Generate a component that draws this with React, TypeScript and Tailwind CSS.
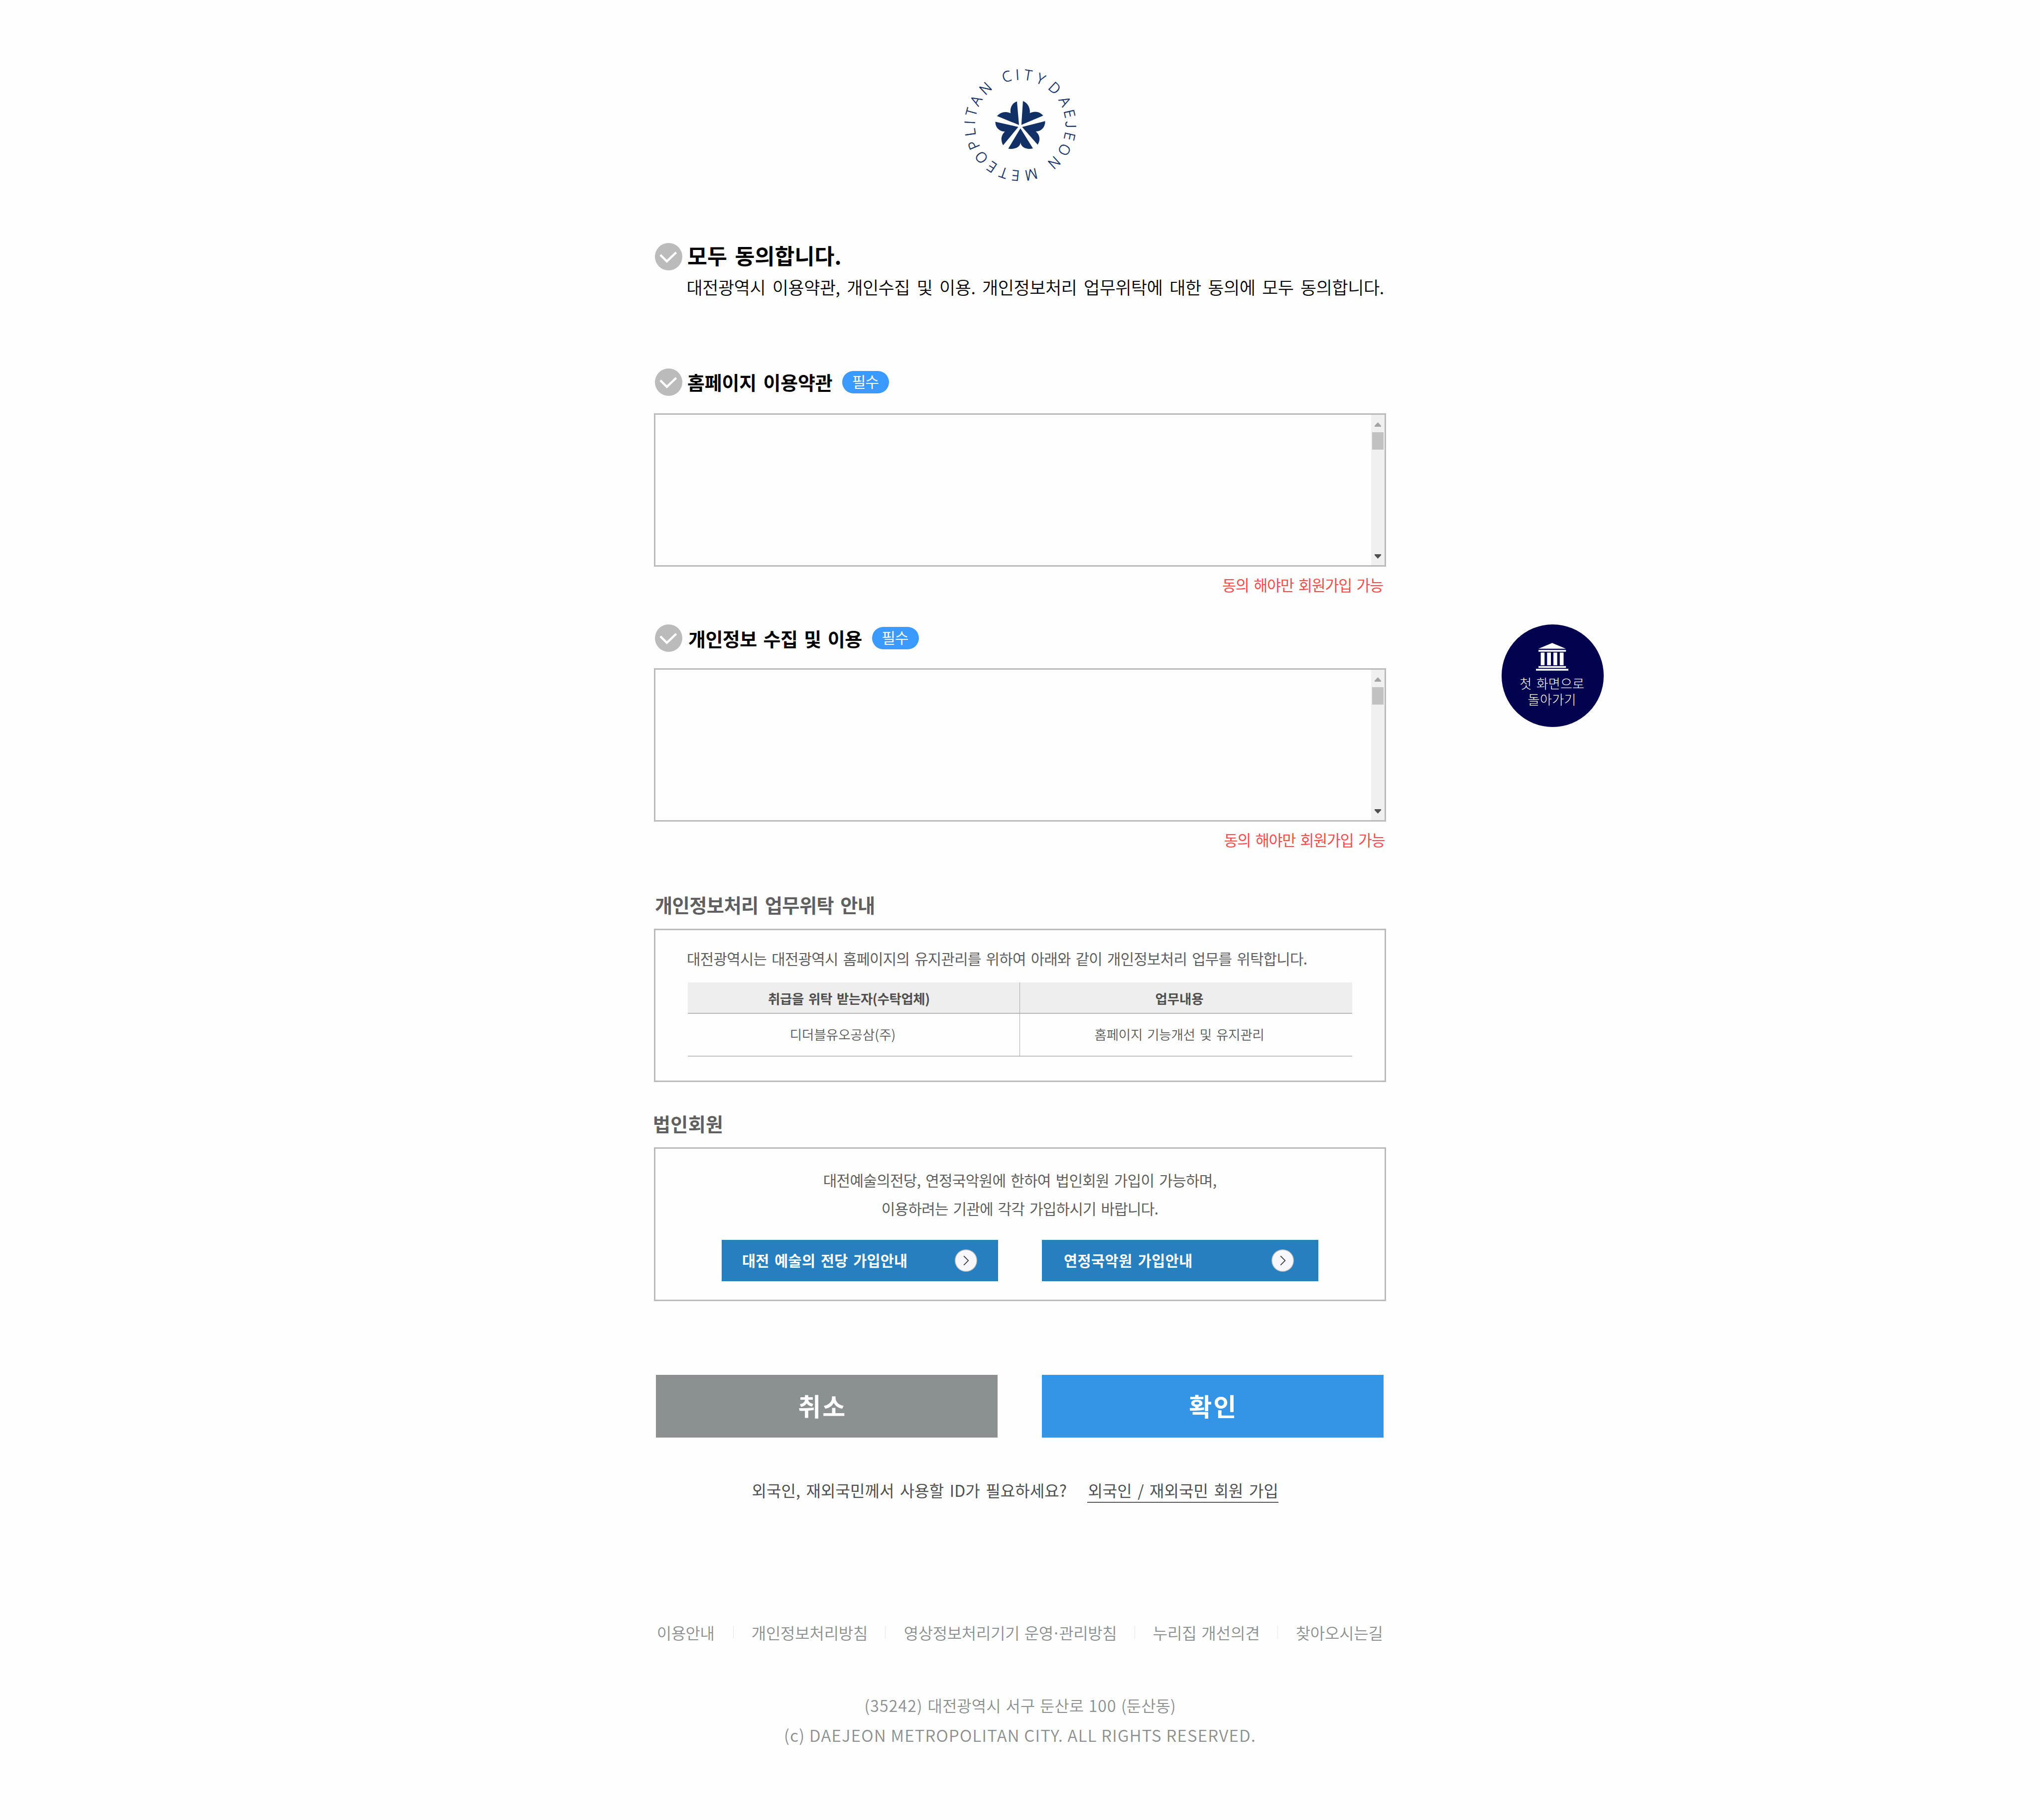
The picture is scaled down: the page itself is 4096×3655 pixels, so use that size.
import type { ReactNode } from "react";

/* Letters of the ring around the emblem, with their clockwise angle from the top. */
const ringLetters: [string, number][] = [
  ["D", 42.9], ["A", 62], ["E", 76.9], ["J", 89.5], ["E", 102.8], ["O", 119.2], ["N", 137.9],
  ["M", 167.4], ["E", 185.3], ["T", 199.3], ["E", 214.1], ["O", 230.3], ["P", 246.8], ["L", 261.8],
  ["I", 273.1], ["T", 285.1], ["A", 299.1], ["N", 316.5],
  ["C", 344.3], ["I", 356.8], ["T", 9], ["Y", 24],
];

function Logo() {
  return (
    <svg className="mx-auto h-[288px] w-[295px]" viewBox="2.5 0 1230 1200" fill="#122f66">
      {ringLetters.map(([letter, angle], i) => (
        <text
          key={i}
          x="617.5"
          y="217"
          textAnchor="middle"
          transform={`rotate(${angle} 617.5 597)`}
          stroke="#122f66"
          strokeWidth="2.5"
          className={
            letter === "J"
              ? "font-['Noto_Sans_CJK_KR'] text-[119px] font-light"
              : "font-['Open_Sans'] text-[121px] font-light"
          }
        >
          {letter}
        </text>
      ))}
      <path d="M607 596 L423 521 C452 488 498 477 537 498 C529 455 547 413 590 399 Z" />
      <path d="M627 595 L640 396 C680 410 703 455 698 497 C738 475 785 484 809 518 Z" />
      <path d="M633 612 L826 564 C828 612 795 650 747 650 C783 680 788 720 763 761 Z" />
      <path d="M601 612 L409 569 C409 615 440 650 489 651 C455 683 452 725 474 766 Z" />
      <path d="M619 624 L724 792 C675 805 622 785 620 741 C617 785 566 803 517 794 Z" />
    </svg>
  );
}

function Check() {
  return (
    <svg className="size-[55px] shrink-0" viewBox="0 0 76 76">
      <circle cx="38" cy="38" r="38" fill="#bbbbbb" />
      <path d="M15 33 L33 51 L59 26" fill="none" stroke="#ffffff" strokeWidth="6" />
    </svg>
  );
}

function RequiredBadge() {
  return (
    <span className="mt-[5px] h-[45px] w-[93.5px] rounded-full bg-[#3a9aff] pr-[2px] text-center text-[30px] leading-[41px] tracking-[-1px] text-white">
      필수
    </span>
  );
}

function TermsBox() {
  return (
    <div className="flex h-[308px] justify-end border-[3px] border-[#bbbbbb]">
      <div className="flex w-[27px] flex-col items-center bg-[#f0f0f0]">
        <svg className="mt-[15px] h-[9px] w-[13px]" viewBox="0 0 13 9" fill="#a3a3a3">
          <path d="M6.5 0 L13 7 V9 H0 V7 Z" />
        </svg>
        <div className="mt-[11px] h-[35px] w-[23px] bg-[#c1c1c1]" />
        <svg className="mt-auto mb-[13px] h-[9px] w-[13px]" viewBox="0 0 13 9" fill="#505050">
          <path d="M0 0 H13 V2 L6.5 9 L0 2 Z" />
        </svg>
      </div>
    </div>
  );
}

function GuideButton({ className, children }: { className: string; children: ReactNode }) {
  return (
    <button className={`flex h-[83px] w-[555px] items-center justify-between bg-[#2680c0] text-[29.4px] font-bold text-white ${className}`}>
      <span className="pb-[2px]">{children}</span>
      <svg className="size-[45px]" viewBox="0 0 62 62">
        <circle cx="31" cy="31" r="30" fill="#f8f8fc" stroke="#b9b9b9" strokeWidth="2" />
        <path d="M25 18.5 L37.5 31 L25 43.5" fill="none" stroke="#333333" strokeWidth="2.4" />
      </svg>
    </button>
  );
}

function HomeButton() {
  return (
    <a className="absolute top-[1254px] left-[3014.5px] flex size-[205.5px] flex-col items-center rounded-full bg-[#02024e] pr-[2px] pt-[37px] text-[26px] leading-[31.5px] font-light text-white">
      <svg className="h-[56px] w-[65px]" viewBox="435 283 272 233" fill="#ffffff">
        <path d="M571 283 L686 332 H456 Z" />
        <path d="M456 341.5 h231 v15 h-231 Z M456 478 h231 v15 h-231 Z M435 500.5 h273 v15.5 h-273 Z" />
        <path d="M475 363.5 h32 v107 h-32 Z M528.5 363.5 h32 v107 h-32 Z M581.5 363.5 h32 v107 h-32 Z M635 363.5 h32 v107 h-32 Z" />
      </svg>
      <span className="mt-[9px] tracking-[0.2px] [word-spacing:3.4px]">첫 화면으로</span>
      <span className="tracking-[0.4px]">돌아가기</span>
    </a>
  );
}

function Separator() {
  return <span className="h-[26px] w-px bg-[#e6e6e6]" />;
}

export default function App() {
  return (
    <div className="relative h-[3655px] w-[4096px] overflow-hidden bg-[#fefefe] font-['Noto_Sans_CJK_KR',sans-serif] whitespace-nowrap text-black">
      <main className="mx-auto flex w-[1470px] flex-col pt-[108px]">
        <Logo />

        <div className="mt-[92px] flex pl-[2px]">
          <Check />
          <h1 className="-mt-[3px] ml-[10px] text-[43.4px] leading-[55px] font-bold tracking-[0.07px] [word-spacing:5.6px]">
            모두 동의합니다.
          </h1>
        </div>
        <p className="mt-[8px] pl-[65.5px] text-[35px] leading-[50px] font-[350] tracking-[-0.48px] [word-spacing:6.3px]">
          대전광역시 이용약관, 개인수집 및 이용. 개인정보처리 업무위탁에 대한 동의에 모두 동의합니다.
        </p>

        <div className="mt-[139px] flex pl-[2px]">
          <Check />
          <h2 className="-mt-[1px] mr-[20px] ml-[10px] text-[37.9px] leading-[55px] font-bold tracking-[-0.1px] [word-spacing:4.9px]">
            홈페이지 이용약관
          </h2>
          <RequiredBadge />
        </div>
        <div className="mt-[35px]">
          <TermsBox />
        </div>
        <p className="mt-[14px] pr-[6px] text-right text-[30.4px] leading-[44px] tracking-[-1.22px] text-[#ff4a4a] [word-spacing:4px]">
          동의 해야만 회원가입 가능
        </p>

        <div className="mt-[58px] flex pl-[2px]">
          <Check />
          <h2 className="mr-[20.5px] ml-[12px] text-[38px] leading-[55px] font-bold tracking-[-0.58px] [word-spacing:5px]">
            개인정보 수집 및 이용
          </h2>
          <RequiredBadge />
        </div>
        <div className="mt-[33px]">
          <TermsBox />
        </div>
        <p className="mt-[14px] pr-[2.5px] text-right text-[30.4px] leading-[44px] tracking-[-1.22px] text-[#ff4a4a] [word-spacing:4px]">
          동의 해야만 회원가입 가능
        </p>

        <h3 className="mt-[81px] pl-[2px] text-[38.3px] leading-[56px] font-bold tracking-[-0.62px] text-[#606060] [word-spacing:5px]">
          개인정보처리 업무위탁 안내
        </h3>
        <section className="mt-[20px] flex h-[308px] flex-col border-[3px] border-[#bbbbbb] pt-[34px] pl-[65px]">
          <p className="-ml-[2px] text-[29.8px] leading-[44px] tracking-[-0.69px] text-[#5f5f5f] [word-spacing:3.87px]">
            대전광역시는 대전광역시 홈페이지의 유지관리를 위하여 아래와 같이 개인정보처리 업무를 위탁합니다.
          </p>
          <div className="mt-[27px] grid w-[1334px] grid-cols-2 text-center text-[26.5px]">
            <div className="h-[63px] border-r border-b-2 border-r-[#a9a9a9] border-b-[#b8b8b8] bg-[#eeeeee] pt-px pr-[19px] leading-[61px] font-bold tracking-[-0.42px] text-[#505050] [word-spacing:3.45px]">
              취급을 위탁 받는자(수탁업체)
            </div>
            <div className="h-[63px] border-b-2 border-[#b8b8b8] bg-[#eeeeee] pt-px pr-[27px] leading-[61px] font-bold tracking-[-0.1px] text-[#505050]">
              업무내용
            </div>
            <div className="h-[86px] border-r border-b-2 border-r-[#a9a9a9] border-b-[#c0c0c0] pr-[44px] leading-[82px] font-[350] text-[#5b5b5b]">
              디더블유오공삼(주)
            </div>
            <div className="h-[86px] border-b-2 border-[#c0c0c0] pr-[27px] leading-[82px] font-[350] tracking-[-0.26px] text-[#5b5b5b] [word-spacing:3.45px]">
              홈페이지 기능개선 및 유지관리
            </div>
          </div>
        </section>

        <h3 className="mt-[55px] -ml-[2px] text-[38px] leading-[56px] font-bold tracking-[0.39px] text-[#606060]">법인회원</h3>
        <section className="mt-[20px] flex h-[309px] flex-col border-[3px] border-[#bbbbbb] pt-[34px]">
          <p className="pr-[1px] text-center text-[30px] leading-[57px] tracking-[-0.75px] text-[#5f5f5f] [word-spacing:3.9px]">
            대전예술의전당, 연정국악원에 한하여 법인회원 가입이 가능하며,
            <br />
            <span className="tracking-[-0.83px]">이용하려는 기관에 각각 가입하시기 바랍니다.</span>
          </p>
          <div className="mt-[35px] flex justify-center gap-[88px]">
            <GuideButton className="pr-[42px] pl-[41px] tracking-[0.25px] [word-spacing:3.8px]">대전 예술의 전당 가입안내</GuideButton>
            <GuideButton className="pr-[49.5px] pl-[44px] tracking-[0.5px] [word-spacing:3.8px]">연정국악원 가입안내</GuideButton>
          </div>
        </section>

        <div className="mt-[148px] flex gap-[89.5px] pl-[4px] text-[50px] font-bold tracking-[3px] text-white">
          <button className="h-[126px] w-[685.5px] bg-[#8b9090] pr-[17px] pb-[4px]">취소</button>
          <button className="h-[126px] w-[685.5px] bg-[#3495e6] pb-[4px] pl-[3px]">확인</button>
        </div>

        <div className="mt-[82px] flex pl-[196.5px] text-[32px] leading-[46px] text-[#505050] [word-spacing:4.15px]">
          <span className="tracking-[0.07px]">외국인, 재외국민께서 사용할 ID가 필요하세요?</span>
          <a className="ml-[41px] w-[384.5px] border-b-2 border-[#5a5a5a] pb-px pl-[1.4px] tracking-[0.04px]">외국인 / 재외국민 회원 가입</a>
        </div>

        <nav className="mt-[237px] flex items-center pl-[5.7px] text-[32px] leading-[46px] font-[350] text-[#8b8f8f]">
          <a className="w-[153px] tracking-[-0.5px]">이용안내</a>
          <Separator />
          <a className="ml-[36px] w-[268px] tracking-[-0.25px]">개인정보처리방침</a>
          <Separator />
          <a className="ml-[37px] w-[463px] tracking-[-0.4px] [word-spacing:3px]">
            영상정보처리기기 운영<span className="-mx-[3px]">·</span>관리방침
          </a>
          <Separator />
          <a className="ml-[36px] w-[250px] tracking-[-0.1px] [word-spacing:2.5px]">누리집 개선의견</a>
          <Separator />
          <a className="ml-[36px] tracking-[-0.3px]">찾아오시는길</a>
        </nav>

        <footer className="mt-[100px] text-center font-[350] text-[#8b8f8f]">
          <p className="text-[32px] leading-[46px] [word-spacing:2.5px]">
            <span className="tracking-[1.2px]">(35242)</span> 대전광역시 서구 둔산로 <span className="tracking-[1px]">100</span> (둔산동)
          </p>
          <p className="mt-[14px] text-[33px] leading-[46px] tracking-[1.25px]">(c) DAEJEON METROPOLITAN CITY. ALL RIGHTS RESERVED.</p>
        </footer>
      </main>
      <HomeButton />
    </div>
  );
}
